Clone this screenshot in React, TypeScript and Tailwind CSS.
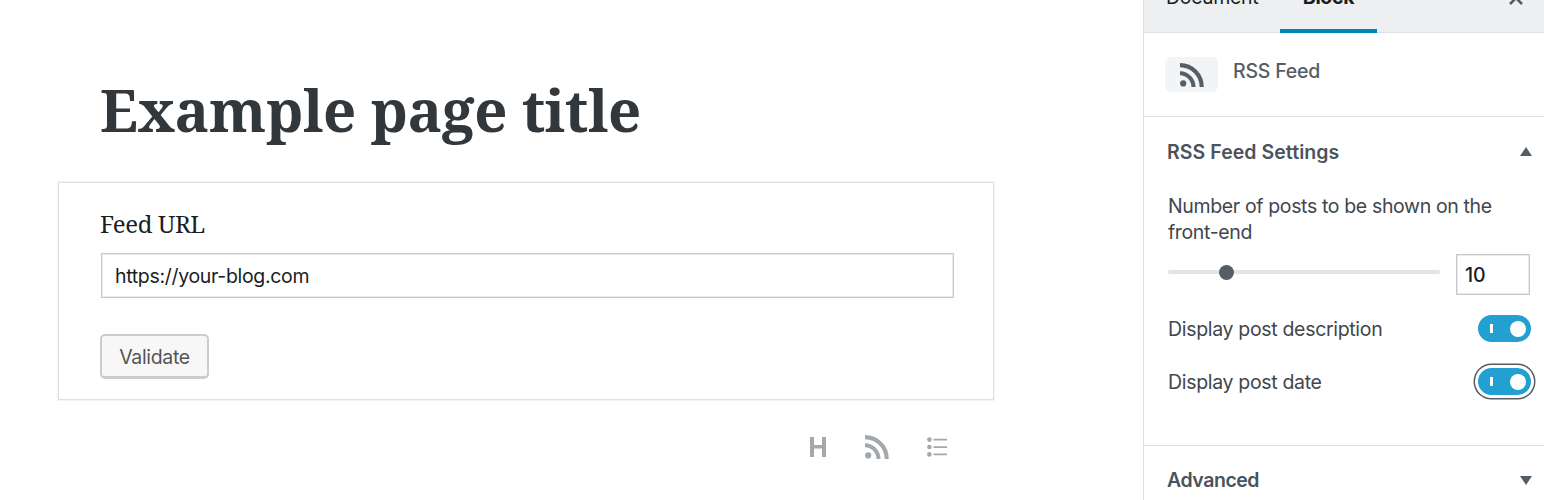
import React from "react";

function RssIcon({ className }: { className: string }) {
  return (
    <svg viewBox="0 0 24 24" className={className} fill="none" stroke="currentColor">
      <circle cx="3.2" cy="20.4" r="3.1" fill="currentColor" stroke="none" />
      <path d="M0 10.2A13.8 13.8 0 0 1 13.5 24M0 2.1A21.8 21.8 0 0 1 21.7 24" strokeWidth="4.1" />
    </svg>
  );
}

function Toggle({ focused = false }: { focused?: boolean }) {
  return (
    <button
      className={
        focused
          ? "flex h-[27px] w-[53px] items-center justify-between rounded-full bg-[#22a0d2] pl-3 pr-[5px] shadow-[0_0_0_3px_#fff,0_0_0_4.5px_#555d66]"
          : "flex h-[27px] w-[53px] items-center justify-between rounded-full bg-[#22a0d2] pl-3 pr-[5px]"
      }
    >
      <span className="h-[9px] w-[3px] bg-white" />
      <span className="size-4 rounded-full bg-white" />
    </button>
  );
}

export default function App() {
  return (
    <div className="flex h-[500px] w-[1544px] overflow-hidden bg-white font-['Inter',sans-serif] text-[19.5px] leading-[26px] tracking-[-0.32px] text-[#40464d]">
      <main className="flex w-[1143px] flex-col pl-[57px]">
        <h1 className="mt-[74px] h-[72px] whitespace-nowrap pl-[43px] font-['Noto_Serif',serif] text-[58px] font-bold leading-[72px] tracking-[-0.36px] text-[#32373c]">
          Example page title
        </h1>
        <section className="ml-px mt-9 flex h-[218px] w-[936px] flex-col items-start border border-[#dfe0e2] pl-[41px] pt-[25px] shadow-[0_0_0_1px_#f4f4f5]">
          <label className="h-8 whitespace-nowrap font-['Noto_Serif',serif] text-[24px] leading-8 tracking-[-0.36px] text-[#191e23]">
            Feed URL
          </label>
          <div className="ml-px mt-[13px] flex h-[45px] w-[853px] items-center border border-[#c4c9ce] pl-[13px] text-[#191e23] shadow-[inset_0_0_0_1px_#e9ebed]">
            <span>https://your-blog.com</span>
          </div>
          <button className="mt-9 flex h-[45px] w-[109px] items-center justify-center rounded-[5px] border-2 border-b-[3px] border-[#cccccc] bg-[#f7f7f7] pt-px text-[#555]">
            Validate
          </button>
        </section>
        <div className="mt-[33px] flex h-7 items-center pl-[753px] text-[#a3a8ad]">
          <svg viewBox="0 0 16 20" className="h-5 w-4" fill="currentColor">
            <path d="M0 0h4v8h8V0h4v20h-4v-8.500H4V20H0z" />
          </svg>
          <RssIcon className="ml-[39px] size-6" />
          <svg viewBox="0 0 20 20" className="ml-[38px] size-5" fill="currentColor">
            <circle cx="2.4" cy="2.600" r="2.300" />
            <circle cx="2.400" cy="10" r="2.300" />
            <circle cx="2.400" cy="17.400" r="2.300" />
            <path d="M6.500 1.800H20v1.700H6.500zM6.500 9.200H20v1.700H6.500zM6.500 16.600H20v1.700H6.500z" />
          </svg>
        </div>
      </main>

      <aside className="flex w-[401px] flex-col border-l border-[#dcdfe2]">
        <header className="flex h-[33px] shrink-0 items-start border-b border-[#dcdfe3] bg-[#edeff0] text-[#191e23]">
          <span className="-mt-4 ml-[22px] w-[114px] whitespace-nowrap">Document</span>
          <div className="flex h-[33px] w-[97px] flex-col items-center justify-between border-b-4 border-[#0085ba]">
            <span className="-mt-4 font-bold">Block</span>
          </div>
          <svg viewBox="0 0 14 14" className="-mt-[9px] ml-[132px] size-[14px] text-[#555d66]" stroke="currentColor" strokeWidth="2.600">
            <path d="M1 1l12 12M13 1L1 13" />
          </svg>
        </header>
        <div className="flex h-[84px] shrink-0 items-start border-b border-[#dcdfe2] pl-[21px] pt-6">
          <div className="flex h-[35px] w-[53px] items-center justify-center rounded-[6px] bg-[#f3f4f5] text-[#555d66]">
            <RssIcon className="size-6" />
          </div>
          <span className="ml-[15px] mt-px font-medium tracking-[-0.2px] text-[#555d66]">RSS Feed</span>
        </div>
        <section className="flex h-[329px] shrink-0 flex-col border-b border-[#dcdfe2] pl-6">
          <div className="mt-[22px] flex h-[26px] items-center justify-between pr-3">
            <h2 className="-ml-px font-semibold tracking-[0.06px] text-[#4b535b]">RSS Feed Settings</h2>
            <svg viewBox="0 0 12 9" className="-mt-px h-[9px] w-3" fill="#555d66"><path d="M6 0l6 9H0z" /></svg>
          </div>
          <p className="mt-7 w-[350px] whitespace-nowrap tracking-[-0.36px]">
            Number of posts to be shown on the
            <br />
            front-end
          </p>
          <div className="mt-[9px] flex h-[42px] items-start">
            <div className="mt-[10px] flex h-4 w-[272px] items-center">
              <div className="h-1 w-[51px] rounded-l-full bg-[#e2e4e7]" />
              <div className="size-[15px] rounded-full bg-[#555d66]" />
              <div className="h-1 flex-1 rounded-r-full bg-[#e2e4e7]" />
            </div>
            <div className="ml-4 flex h-[41px] w-[74px] items-center border border-[#c4c9ce] pl-2 font-medium tracking-[0px] text-[#191e23] shadow-[inset_0_0_0_1px_#e9ebed]">10</div>
          </div>
          <div className="mt-[19px] flex h-[27px] items-center justify-between pr-[13px]">
            <span>Display post description</span>
            <Toggle />
          </div>
          <div className="mt-[26px] flex h-[27px] items-center justify-between pr-[13px]">
            <span>Display post date</span>
            <Toggle focused />
          </div>
        </section>
        <div className="mt-[21px] flex h-[26px] shrink-0 items-center justify-between pl-[23px] pr-3">
          <h2 className="font-semibold tracking-[-0.45px] text-[#4b535b]">Advanced</h2>
          <svg viewBox="0 0 12 9" className="h-[9px] w-3" fill="#555d66"><path d="M6 9l6-9H0z" /></svg>
        </div>
      </aside>
    </div>
  );
}
